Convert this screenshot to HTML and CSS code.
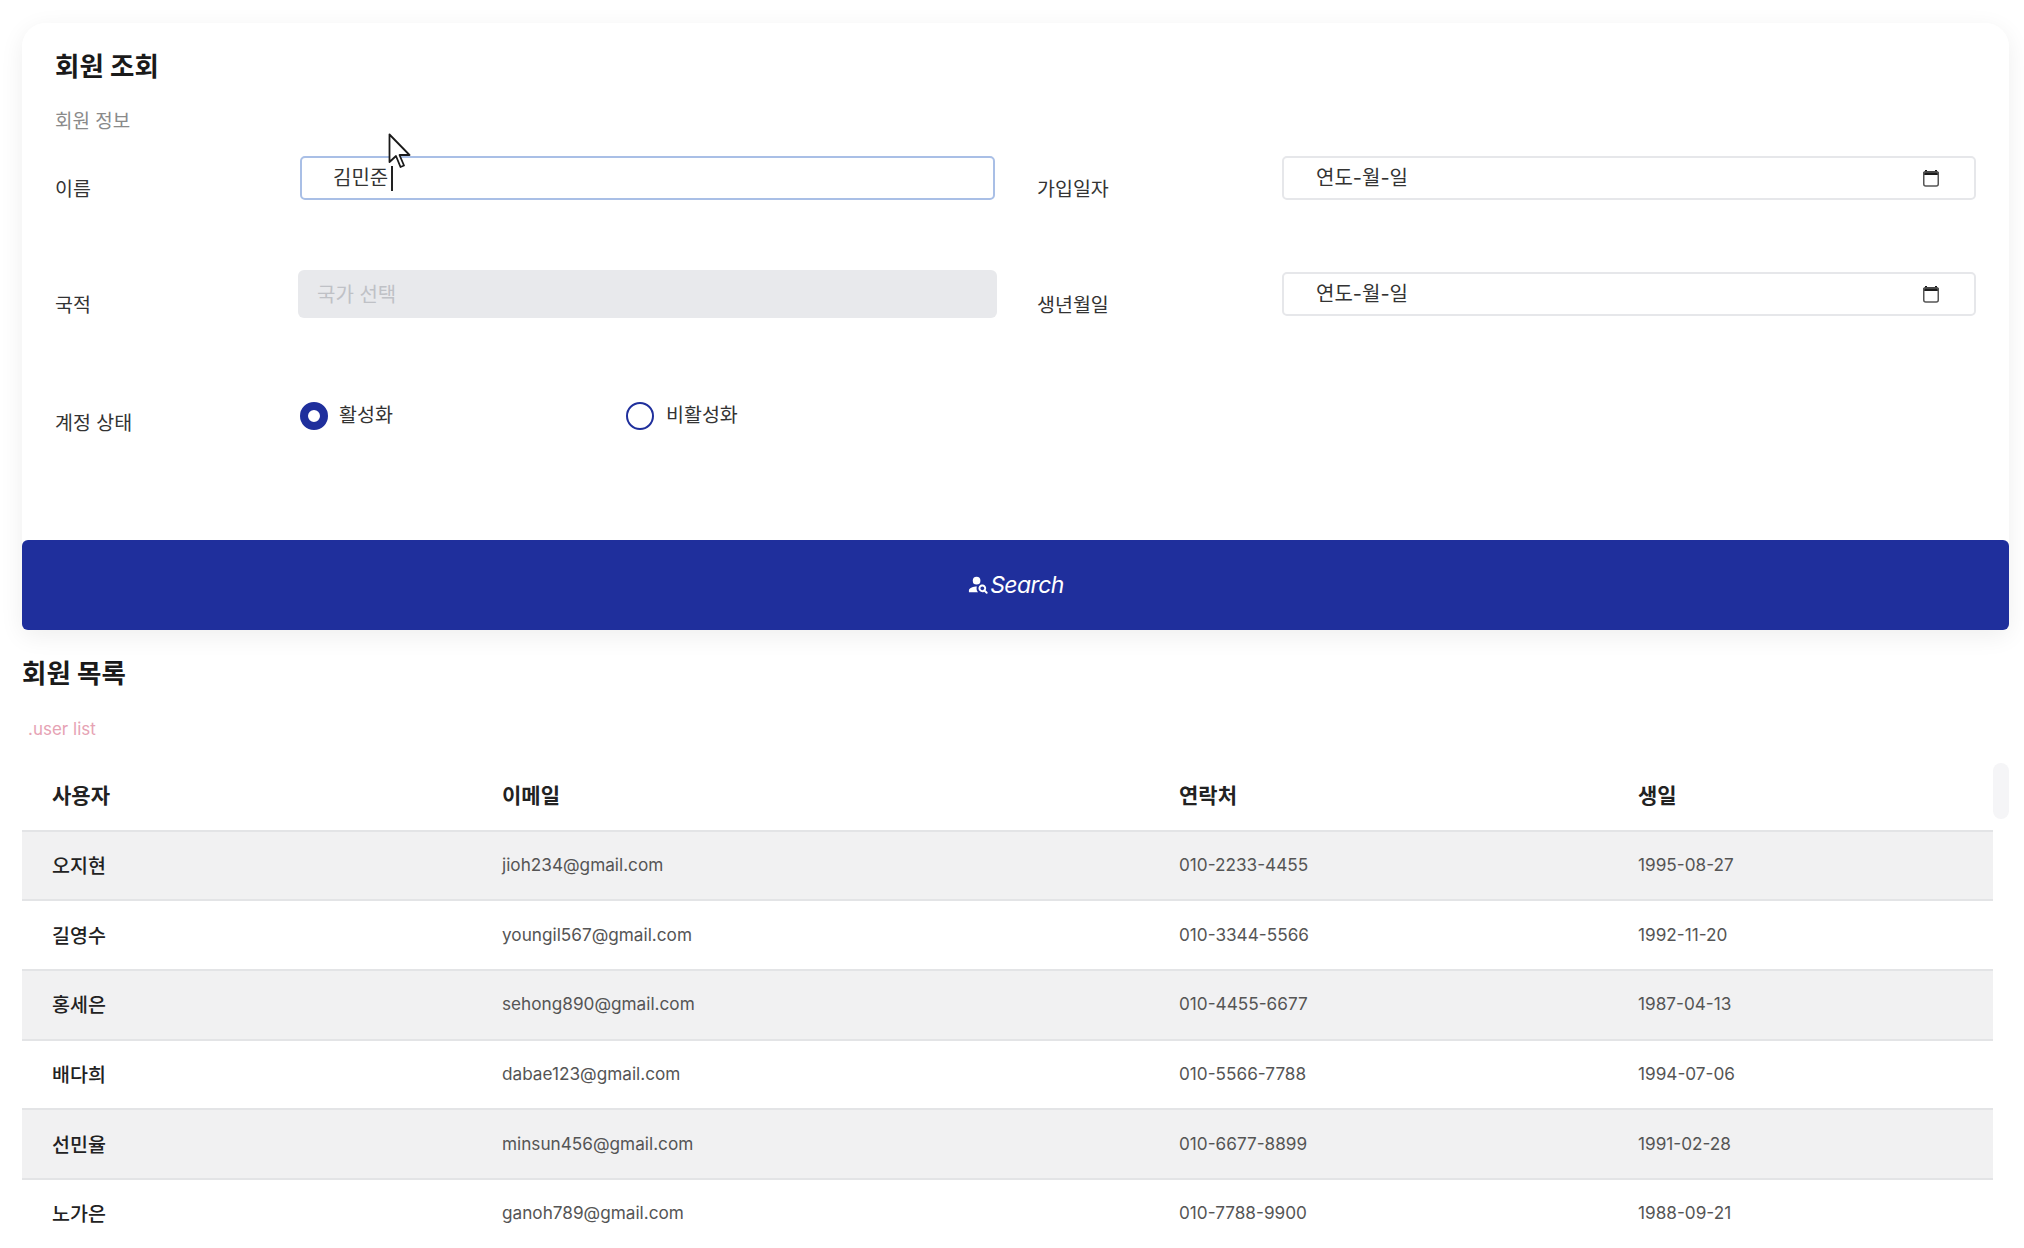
FILE: index.html
```html
<!DOCTYPE html>
<html lang="ko">
<head>
    <meta charset="UTF-8">
    <meta name="viewport" content="width=device-width, initial-scale=1.0">
    <title>회원 조회</title>
    <link rel="stylesheet" href="styles.css">
</head>
<body>
    <div class="page">
        <section class="search-panel">
            <div class="search-card">
                <h2 class="card-title">회원 조회</h2>
                <p class="card-sub">회원 정보</p>

                <div class="form-grid">
                    <span class="label label-first">이름</span>
                    <div class="field field-active"><span class="field-text">김민준</span><span class="caret"></span></div>
                    <span class="label label-first">가입일자</span>
                    <div class="field">
                        <span class="field-text">연도-월-일</span>
                        <svg class="calendar" viewBox="0 0 18 18"><path d="M3 1h2v1h8V1h2v1.2A2 2 0 0 1 17 4v2H1V4a2 2 0 0 1 2-1.8z" fill="#1c1c1c"/><rect x="1.75" y="3" width="14.5" height="14" rx="2" fill="none" stroke="#555" stroke-width="1.5"/></svg>
                    </div>

                    <span class="label label-second">국적</span>
                    <div class="field-disabled">국가 선택</div>
                    <span class="label label-second">생년월일</span>
                    <div class="field field-low">
                        <span class="field-text">연도-월-일</span>
                        <svg class="calendar" viewBox="0 0 18 18"><path d="M3 1h2v1h8V1h2v1.2A2 2 0 0 1 17 4v2H1V4a2 2 0 0 1 2-1.8z" fill="#1c1c1c"/><rect x="1.75" y="3" width="14.5" height="14" rx="2" fill="none" stroke="#555" stroke-width="1.5"/></svg>
                    </div>

                    <span class="label label-third">계정 상태</span>
                    <div class="radio-group">
                        <div class="radio-item"><span class="radio radio-on"></span><span class="radio-text">활성화</span></div>
                        <div class="radio-item"><span class="radio"></span><span class="radio-text">비활성화</span></div>
                    </div>
                </div>
            </div>
            <button class="search-btn">
                <svg class="search-icon" viewBox="0 0 24 24" fill="#fff"><circle cx="10" cy="8" r="4"/><path d="M10.35 14.01C7.62 13.91 2 15.27 2 18v2h9.54c-2.47-2.76-1.23-5.89-1.19-5.99z"/><path d="M19.43 18.02c.47-.8.7-1.77.48-2.82-.34-1.64-1.72-2.95-3.38-3.16-2.63-.34-4.85 1.87-4.5 4.5.22 1.66 1.52 3.04 3.16 3.38 1.05.22 2.02-.01 2.82-.48l1.86 1.86c.39.39 1.02.39 1.41 0 .39-.39.39-1.02 0-1.41l-1.85-1.87zM16 18c-1.1 0-2-.9-2-2s.9-2 2-2 2 .9 2 2-.9 2-2 2z"/></svg>
                <span>Search</span>
            </button>
        </section>

        <section class="list-section">
            <h2 class="list-title">회원 목록</h2>
            <p class="list-sub">.user list</p>
            <table class="user-table">
                <thead>
                    <tr><th>사용자</th><th>이메일</th><th>연락처</th><th>생일</th></tr>
                </thead>
                <tbody>
                    <tr><td>오지현</td><td>jioh234@gmail.com</td><td>010-2233-4455</td><td>1995-08-27</td></tr>
                    <tr><td>길영수</td><td>youngil567@gmail.com</td><td>010-3344-5566</td><td>1992-11-20</td></tr>
                    <tr><td>홍세은</td><td>sehong890@gmail.com</td><td>010-4455-6677</td><td>1987-04-13</td></tr>
                    <tr><td>배다희</td><td>dabae123@gmail.com</td><td>010-5566-7788</td><td>1994-07-06</td></tr>
                    <tr><td>선민율</td><td>minsun456@gmail.com</td><td>010-6677-8899</td><td>1991-02-28</td></tr>
                    <tr><td>노가은</td><td>ganoh789@gmail.com</td><td>010-7788-9900</td><td>1988-09-21</td></tr>
                </tbody>
            </table>
            <div class="scroll-thumb"></div>
        </section>

        <svg class="mouse" viewBox="0 0 24 36"><path d="M1.5 1.5V29l6.5-6 4.5 11 3.5-1.5-4.5-10.5h10z" fill="#fff" stroke="#1a1a1a" stroke-width="1.8" stroke-linejoin="round"/></svg>
    </div>
</body>
</html>
```

FILE: styles.css
```css
* {
    box-sizing: border-box;
}

html, body {
    margin: 0;
    height: 1248px;
    overflow: hidden;
}

body {
    font-family: Inter, "Noto Sans CJK KR", sans-serif;
    background: #fff;
    color: #222;
}

.page {
    position: relative;
    height: 1248px;
    padding: 23px 15px 0 22px;
    overflow: hidden;
}

.search-panel {
    border-radius: 24px 24px 8px 8px;
    box-shadow: 0 6px 24px rgba(0, 0, 0, 0.07);
}

.search-card {
    height: 517px;
    padding: 27px 33px 0 33px;
    background: #fff;
    border-radius: 24px 24px 0 0;
}

.card-title {
    margin: 0;
    font-size: 26.5px;
    line-height: 32px;
    font-weight: 700;
    color: #1a1a1a;
}

.card-sub {
    margin: 28px 0 0;
    font-size: 19px;
    line-height: 24px;
    color: #8a8a8a;
}

.form-grid {
    display: grid;
    grid-template-columns: 245px 695px 287px 694px;
    grid-template-rows: 114px 132px auto;
    margin-top: 22px;
}

.label {
    font-size: 19.5px;
    line-height: 28px;
    color: #333;
}

.label:nth-child(3), .label:nth-child(7) {
    margin-left: 42px;
}

.label-first {
    padding-top: 19px;
}

.label-second {
    padding-top: 21px;
}

.label-third {
    padding-top: 7px;
}

.field {
    display: flex;
    align-items: center;
    justify-content: space-between;
    height: 44px;
    padding: 0 34px 0 32px;
    font-size: 20px;
    color: #333;
    background: #fff;
    border: 2px solid #e6e7ea;
    border-radius: 5px;
}

.field-text {
    padding-bottom: 3px;
}

.field-active {
    justify-content: flex-start;
    padding-left: 31px;
    border-color: #a9bfe6;
}

.field-low {
    margin-top: 2px;
}

.caret {
    width: 2px;
    height: 25px;
    margin-left: 3px;
    background: #222;
}

.calendar {
    width: 18px;
    height: 18px;
}

.field-disabled {
    display: flex;
    align-items: center;
    width: 699px;
    height: 48px;
    margin-left: -2px;
    padding: 0 19px 2px;
    font-size: 20px;
    color: #bfc1c6;
    background: #e8e9ec;
    border-radius: 6px;
}

.radio-group {
    display: flex;
    grid-column: 2 / 5;
}

.radio-item {
    display: flex;
    align-items: flex-start;
    gap: 11px;
    width: 326px;
}

.radio-item:last-child {
    gap: 12px;
}

.radio {
    width: 28px;
    height: 28px;
    border: 2px solid #1f2f9c;
    border-radius: 50%;
}

.radio-on {
    border: 8px solid #1f2f9c;
}

.radio-text {
    margin-top: 1px;
    font-size: 19.5px;
    line-height: 24px;
    color: #333;
}

.search-btn {
    display: flex;
    align-items: center;
    justify-content: center;
    gap: 0;
    width: 100%;
    height: 90px;
    padding: 0;
    border: none;
    border-radius: 6px;
    background: #1f2f9c;
    color: #fff;
    font-family: Inter, sans-serif;
    font-size: 23px;
    font-style: italic;
    letter-spacing: -0.6px;
}

.search-icon {
    width: 23px;
    height: 23px;
    margin-top: -2px;
}

.list-section {
    position: relative;
    padding-top: 26px;
}

.list-title {
    margin: 0;
    font-size: 26.5px;
    line-height: 34px;
    font-weight: 700;
    color: #1a1a1a;
}

.list-sub {
    margin: 27px 0 20px 6px;
    font-size: 17px;
    line-height: 24px;
    color: #e6a3b4;
}

.user-table {
    width: 1971px;
    table-layout: fixed;
    border-collapse: collapse;
}

.user-table th, .user-table td {
    height: 69.7px;
    padding: 0 0 2px 30px;
    text-align: left;
    border-bottom: 2px solid #e3e4e6;
}

.user-table th {
    padding-bottom: 3px;
    font-size: 21px;
    font-weight: 700;
    color: #222;
}

.user-table th:nth-child(1) {
    width: 450px;
}

.user-table th:nth-child(2) {
    width: 677px;
}

.user-table th:nth-child(3) {
    width: 459px;
}

.user-table td {
    font-size: 17.2px;
    color: #555;
}

.user-table td:first-child {
    padding-bottom: 2px;
    font-size: 19.5px;
    font-weight: 500;
    color: #222;
}

.user-table tbody tr:nth-child(odd) {
    background: #f1f1f2;
}

.user-table tbody tr:last-child td {
    padding-bottom: 4px;
    border-bottom: none;
}

.scroll-thumb {
    position: absolute;
    top: 133px;
    right: 0;
    width: 16px;
    height: 56px;
    background: #f5f5f7;
    border-radius: 8px;
}

.mouse {
    position: absolute;
    left: 388px;
    top: 133px;
    width: 24px;
    height: 36px;
}
```
